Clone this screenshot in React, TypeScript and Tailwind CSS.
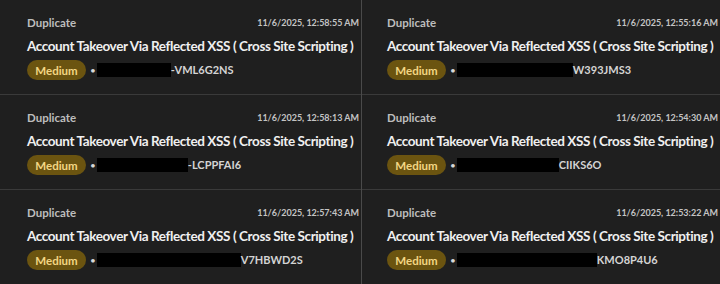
type Report = {
  time: string;
  redact: number;
  tail: string;
};

const left: Report[] = [
  { time: '11/6/2025, 12:58:55 AM', redact: 74, tail: '-VML6G2NS' },
  { time: '11/6/2025, 12:58:13 AM', redact: 91, tail: '-LCPPFAI6' },
  { time: '11/6/2025, 12:57:43 AM', redact: 144, tail: 'V7HBWD2S' },
];

const right: Report[] = [
  { time: '11/6/2025, 12:55:16 AM', redact: 116, tail: 'W393JMS3' },
  { time: '11/6/2025, 12:54:30 AM', redact: 102, tail: 'CIIKS6O' },
  { time: '11/6/2025, 12:53:22 AM', redact: 140, tail: 'KMO8P4U6' },
];

function ReportRow({ report, last }: { report: Report; last: boolean }) {
  return (
    <div className={`flex-1 pl-[27px] pr-[2px] pt-[14px] ${last ? '' : 'border-b border-[#3a3a3a]'}`}>
      <div className="flex items-center justify-between">
        <span className="text-[11.5px] font-bold text-[#bdbdbd]">Duplicate</span>
        <span className="text-[9px] font-bold text-[#c4c4c4]">{report.time}</span>
      </div>
      <h3 className="mt-[5px] whitespace-nowrap text-[13.5px] font-bold leading-5 tracking-[-0.4px] text-[#f0f0f0]">
        Account Takeover Via Reflected XSS ( Cross Site Scripting )
      </h3>
      <div className="mt-[4px] flex items-center">
        <span className="flex h-[20px] w-[59px] items-center justify-center rounded-full bg-[#6b5410] text-[11.5px] font-bold text-[#f3d684]">
          Medium
        </span>
        <span className="ml-[4px] text-[10px] text-[#d8d8d8]">•</span>
        <span className="ml-[1px] h-[14px] bg-black" style={{ width: report.redact }} />
        <span className="text-[11px] font-bold text-[#d4d4d4]">{report.tail}</span>
      </div>
    </div>
  );
}

function Panel({ items, className }: { items: Report[]; className: string }) {
  return (
    <div className={`flex h-full flex-col bg-[#1f1f1f] ${className}`}>
      {items.map((r, i) => (
        <ReportRow key={r.time} report={r} last={i === items.length - 1} />
      ))}
    </div>
  );
}

export default function App() {
  return (
    <div className="flex h-[284px] w-[720px] overflow-hidden bg-[#1f1f1f] font-['Lato',sans-serif]">
      <Panel items={left} className="w-[362px] border-r border-[#4a4a4a]" />
      <Panel items={right} className="w-[358px] [&>div]:pl-[25px]" />
    </div>
  );
}
